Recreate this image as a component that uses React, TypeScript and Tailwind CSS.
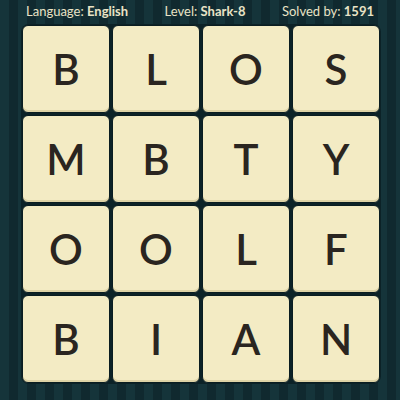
const rows = [
  ['B', 'L', 'O', 'S'],
  ['M', 'B', 'T', 'Y'],
  ['O', 'O', 'L', 'F'],
  ['B', 'I', 'A', 'N'],
];

const App = () => {
  return (
    <div className="h-[400px] w-[400px] overflow-hidden bg-[repeating-linear-gradient(90deg,#15343a_0px,#15343a_9px,#10292f_9px,#10292f_18px)] font-['Lato','Noto_Sans',sans-serif]">
      {/* header */}
      <div className="flex h-[24px] items-center justify-between pl-[26px] pr-[26px] text-[13px] text-[#e9e3c6]">
        <span>
          Language: <b className="font-bold">English</b>
        </span>
        <span>
          Level: <b className="font-bold">Shark-8</b>
        </span>
        <span>
          Solved by: <b className="font-bold">1591</b>
        </span>
      </div>

      {/* board */}
      <div className="ml-[21px] mt-[0px] w-[360px] rounded-[8px] bg-[#0c2227] p-[1px]">
        <div className="grid grid-cols-4 gap-[2px]">
          {rows.flat().map((ch, i) => (
            <div
              key={i}
              className="flex h-[88px] items-center justify-center rounded-[6px] border border-[#0a1d21] bg-[#f3ebc4] shadow-[inset_0_-2px_0_#ded3a6] text-[42px] font-semibold leading-none text-[#2a2520]"
            >
              {ch}
            </div>
          ))}
        </div>
      </div>
    </div>
  );
};

export default App;
